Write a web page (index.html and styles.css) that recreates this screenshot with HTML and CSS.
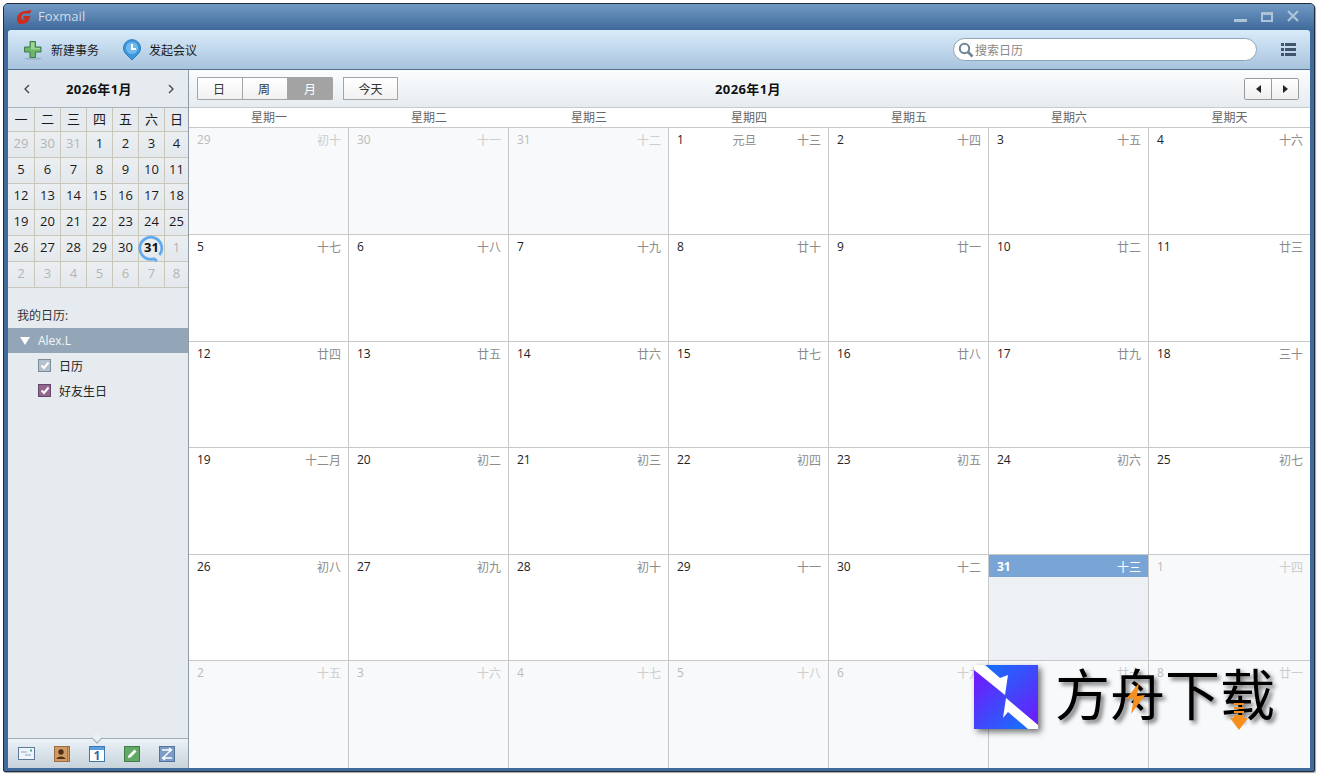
FILE: index.html
```html
<!DOCTYPE html>
<html lang="zh-CN">
<head>
    <meta charset="UTF-8">
    <title>Foxmail</title>
    <link rel="stylesheet" href="styles.css">
</head>
<body>
<div class="window">
    <div class="titlebar">
        <svg class="logo" width="15" height="14" viewBox="0 0 15 14"><path d="M14.500 0 L13 3.500 H8 C5.500 3.500 4 5.500 4 7.500 C4 9.500 5.500 10 7 10 L8 8.500 H6 L7 6 H13.500 L11 11.500 C9 13.500 6 14 3.500 14 C1 14 0 12 0 9 C0 4.500 4 1 9 1 Z" fill="#d02a1a"/></svg>
        <span class="app-name">Foxmail</span>
        <div class="win-btns">
            <i class="win-min"></i>
            <i class="win-max"></i>
            <svg width="12" height="12" viewBox="0 0 12 12"><path d="M1 1 L11 11 M11 1 L1 11" stroke="#adc3da" stroke-width="2.200"/></svg>
        </div>
    </div>
    <div class="toolbar">
        <button class="tool">
            <svg width="20" height="20" viewBox="0 0 20 20"><ellipse cx="10" cy="18.600" rx="9" ry="1.200" fill="#8ca3b8" opacity=".6"/><path d="M7 1.500 H12.500 V7 H18 V12 H12.500 V17.500 H7 V12 H1.500 V7 H7 Z" fill="#6cb56a" stroke="#3c7d48"/><path d="M8 2.500 H11.500 V8 H17 V9.500 H8 Z" fill="#9ad596"/></svg>
            新建事务
        </button>
        <button class="tool tool-meet">
            <svg width="18" height="22" viewBox="0 0 18 22"><path d="M9 21 L4 16 A8.500 8.500 0 1 1 14 16 Z" fill="#3f97dd" stroke="#2a78b8"/><circle cx="9" cy="9" r="6" fill="#6fb9ee"/><path d="M9 5 V10 H13" stroke="#fff" stroke-width="2" fill="none"/></svg>
            发起会议
        </button>
        <div class="search">
            <svg width="16" height="16" viewBox="0 0 16 16"><circle cx="6.500" cy="6.500" r="4.700" fill="none" stroke="#6f8496" stroke-width="2"/><path d="M10 10 L14.500 14.500" stroke="#6f8496" stroke-width="2.600"/></svg>
            <span>搜索日历</span>
        </div>
        <div class="list-icon"><i></i><i></i><i></i></div>
    </div>
    <div class="body">
        <aside class="sidebar">
            <div class="mini-head">
                <svg width="7" height="10" viewBox="0 0 7 10"><path d="M6 1 L2 5 L6 9" fill="none" stroke="#444" stroke-width="1.300"/></svg>
                <b>2026年1月</b>
                <svg width="7" height="10" viewBox="0 0 7 10"><path d="M1 1 L5 5 L1 9" fill="none" stroke="#444" stroke-width="1.300"/></svg>
            </div>
            <div class="mini-cal">
                <span class="wk">一</span><span class="wk">二</span><span class="wk">三</span><span class="wk">四</span><span class="wk">五</span><span class="wk">六</span><span class="wk">日</span>
                <span class="off">29</span><span class="off">30</span><span class="off">31</span><span>1</span><span>2</span><span>3</span><span>4</span>
                <span>5</span><span>6</span><span>7</span><span>8</span><span>9</span><span>10</span><span>11</span>
                <span>12</span><span>13</span><span>14</span><span>15</span><span>16</span><span>17</span><span>18</span>
                <span>19</span><span>20</span><span>21</span><span>22</span><span>23</span><span>24</span><span>25</span>
                <span>26</span><span>27</span><span>28</span><span>29</span><span>30</span>
                <span class="now">31<svg width="28" height="28" viewBox="0 0 28 28"><path d="M22.500 20 A11 11 0 1 0 17 23.800 L20 26" fill="none" stroke="#62aaee" stroke-width="2.800"/></svg></span>
                <span class="off">1</span>
                <span class="off">2</span><span class="off">3</span><span class="off">4</span><span class="off">5</span><span class="off">6</span><span class="off">7</span><span class="off">8</span>
            </div>
            <p class="my-cals">我的日历:</p>
            <div class="account"><i class="tri"></i>Alex.L</div>
            <label class="cal-row"><i class="check check-grey"><svg width="10" height="9" viewBox="0 0 10 9"><path d="M1.500 4.500 L4 7 L8.500 1.500" fill="none" stroke="#fff" stroke-width="2"/></svg></i>日历</label>
            <label class="cal-row"><i class="check check-purple"><svg width="10" height="9" viewBox="0 0 10 9"><path d="M1.500 4.500 L4 7 L8.500 1.500" fill="none" stroke="#fff" stroke-width="2"/></svg></i>好友生日</label>
            <div class="dock">
                <svg width="17" height="14" viewBox="0 0 17 14"><rect x=".5" y=".5" width="16" height="12" fill="#eef4f9" stroke="#5d7a9c"/><path d="M3 5 H9 M7 8 H13" stroke="#8ea3b8"/><rect x="12" y="2.500" width="2" height="2" fill="#4aa88c"/></svg>
                <svg width="16" height="16" viewBox="0 0 16 16"><rect x=".5" y=".5" width="15" height="15" fill="#d09a66" stroke="#9d6c3e"/><circle cx="7" cy="6" r="2.700" fill="#4f2e14"/><path d="M2.500 13 C3 9.500 11 9.500 11.500 13 Z" fill="#4f2e14"/><path d="M13.500 1 V15" stroke="#a87544"/></svg>
                <span class="dock-cal"><i></i>1</span>
                <svg width="16" height="16" viewBox="0 0 16 16"><rect x=".5" y=".5" width="15" height="15" fill="#62a866" stroke="#3f7d46"/><path d="M4 12 L4.500 9.500 L10.500 3.500 L12.500 5.500 L6.500 11.500 Z" fill="#fff"/></svg>
                <svg width="16" height="16" viewBox="0 0 16 16"><rect x=".5" y=".5" width="15" height="15" fill="#7b9cc4" stroke="#53739c"/><path d="M3 4 H12 M12 4 L4 12 M4 12 H13 M10 2 L12.500 4 L10 6 M6 10 L3.500 12 L6 14" fill="none" stroke="#fff" stroke-width="1.400"/></svg>
            </div>
            <i class="dock-notch"></i>
        </aside>
        <main class="main">
            <div class="cal-nav">
                <div class="nav-left">
                    <div class="seg">
                        <button>日</button><button>周</button><button class="active">月</button>
                    </div>
                    <button class="today-btn">今天</button>
                </div>
                <b class="cal-title">2026年1月</b>
                <div class="pager">
                    <button><i class="arrow-l"></i></button><button><i class="arrow-r"></i></button>
                </div>
            </div>
            <div class="week-head">
                <span>星期一</span><span>星期二</span><span>星期三</span><span>星期四</span><span>星期五</span><span>星期六</span><span>星期天</span>
            </div>
            <div class="grid">
                <div class="cell off"><span>29</span><em></em><small>初十</small></div>
                <div class="cell off"><span>30</span><em></em><small>十一</small></div>
                <div class="cell off"><span>31</span><em></em><small>十二</small></div>
                <div class="cell"><span>1</span><em>元旦</em><small>十三</small></div>
                <div class="cell"><span>2</span><em></em><small>十四</small></div>
                <div class="cell"><span>3</span><em></em><small>十五</small></div>
                <div class="cell"><span>4</span><em></em><small>十六</small></div>

                <div class="cell"><span>5</span><em></em><small>十七</small></div>
                <div class="cell"><span>6</span><em></em><small>十八</small></div>
                <div class="cell"><span>7</span><em></em><small>十九</small></div>
                <div class="cell"><span>8</span><em></em><small>廿十</small></div>
                <div class="cell"><span>9</span><em></em><small>廿一</small></div>
                <div class="cell"><span>10</span><em></em><small>廿二</small></div>
                <div class="cell"><span>11</span><em></em><small>廿三</small></div>

                <div class="cell"><span>12</span><em></em><small>廿四</small></div>
                <div class="cell"><span>13</span><em></em><small>廿五</small></div>
                <div class="cell"><span>14</span><em></em><small>廿六</small></div>
                <div class="cell"><span>15</span><em></em><small>廿七</small></div>
                <div class="cell"><span>16</span><em></em><small>廿八</small></div>
                <div class="cell"><span>17</span><em></em><small>廿九</small></div>
                <div class="cell"><span>18</span><em></em><small>三十</small></div>

                <div class="cell"><span>19</span><em></em><small>十二月</small></div>
                <div class="cell"><span>20</span><em></em><small>初二</small></div>
                <div class="cell"><span>21</span><em></em><small>初三</small></div>
                <div class="cell"><span>22</span><em></em><small>初四</small></div>
                <div class="cell"><span>23</span><em></em><small>初五</small></div>
                <div class="cell"><span>24</span><em></em><small>初六</small></div>
                <div class="cell"><span>25</span><em></em><small>初七</small></div>

                <div class="cell"><span>26</span><em></em><small>初八</small></div>
                <div class="cell"><span>27</span><em></em><small>初九</small></div>
                <div class="cell"><span>28</span><em></em><small>初十</small></div>
                <div class="cell"><span>29</span><em></em><small>十一</small></div>
                <div class="cell"><span>30</span><em></em><small>十二</small></div>
                <div class="cell today"><span>31</span><em></em><small>十三</small></div>
                <div class="cell off"><span>1</span><em></em><small>十四</small></div>

                <div class="cell off"><span>2</span><em></em><small>十五</small></div>
                <div class="cell off"><span>3</span><em></em><small>十六</small></div>
                <div class="cell off"><span>4</span><em></em><small>十七</small></div>
                <div class="cell off"><span>5</span><em></em><small>十八</small></div>
                <div class="cell off"><span>6</span><em></em><small class="under-mark">十九</small></div>
                <div class="cell off"><span class="under-mark">7</span><em></em><small class="under-mark">廿十</small></div>
                <div class="cell off"><span>8</span><em></em><small>廿一</small></div>
            </div>
        </main>
    </div>
    <div class="watermark">
        <svg class="wm-logo" width="64" height="64" viewBox="0 0 64 64">
            <defs>
                <linearGradient id="wmLow" x1="0" y1=".3" x2=".7" y2="1"><stop offset="0" stop-color="#6a1ffb"/><stop offset="1" stop-color="#1a6cfb"/></linearGradient>
                <linearGradient id="wmHigh" x1=".3" y1="0" x2="1" y2=".8"><stop offset="0" stop-color="#1a6cfb"/><stop offset="1" stop-color="#6a1ffb"/></linearGradient>
            </defs>
            <polygon points="0,0 0,64 64,64" fill="url(#wmLow)"/>
            <polygon points="0,0 64,0 64,64" fill="url(#wmHigh)"/>
            <path d="M0 0 L11 0 L26 13 L34 10 L31 30 L0 5 Z M32 33 L64 60 L64 64 L54 64 L34 47 L29 53 Z" fill="#fff"/>
        </svg>
        <span class="wm-text">方舟下载</span>
        <svg class="wm-bolt" width="19" height="31" viewBox="0 0 19 31"><path d="M13 0 L0 16 L8 15 L5 31 L19 12 L11 13 Z" fill="#f78f1e"/></svg>
        <svg class="wm-arrow" width="18" height="27" viewBox="0 0 18 27"><path d="M4 0 H14 V2 H4 Z M4 4 H14 V6 H4 Z M4 8 H14 V10 H4 Z M4 12 H14 V15 H18 L9 27 L0 15 H4 Z" fill="#f78f1e"/></svg>
    </div>
</div>
</body>
</html>
```

FILE: styles.css
```css
* {
    margin: 0;
    padding: 0;
    box-sizing: border-box;
}

html, body {
    height: 100%;
    overflow: hidden;
    background: #fff;
}

body {
    font-family: "Open Sans", "Noto Sans CJK SC", sans-serif;
    font-size: 12px;
    color: #222;
}

button {
    font: inherit;
    color: inherit;
    border: none;
    background: none;
}

i, em, small {
    font-style: normal;
    font-size: inherit;
}

.window {
    position: relative;
    display: flex;
    flex-direction: column;
    margin: 3px 0 0 3px;
    width: 1312px;
    height: 769px;
    padding: 0 4px 3px 4px;
    border: 1px solid #1e2c3c;
    border-radius: 5px 5px 2px 2px;
    background: #3f6a9a;
    box-shadow: 1px 1px 1px rgba(0,0,0,0.35);
}

.titlebar {
    display: flex;
    align-items: center;
    flex: none;
    height: 26px;
    margin: 0 -4px;
    padding: 0 15px 2px 13px;
    border-radius: 4px 4px 0 0;
    background: linear-gradient(#7199c4, #3f6a9a);
}

.logo {
    margin-top: 2px;
}

.app-name {
    margin-left: 6px;
    font-size: 13px;
    color: #cfdcea;
}

.win-btns {
    display: flex;
    align-items: center;
    gap: 14px;
    margin-left: auto;
}

.win-min {
    width: 13px;
    height: 3px;
    margin-top: 9px;
    background: #adc3da;
}

.win-max {
    width: 12px;
    height: 10px;
    margin-top: 2px;
    border: 2px solid #adc3da;
    border-top-width: 3px;
}

.toolbar {
    display: flex;
    align-items: center;
    flex: none;
    height: 40px;
    padding: 0 14px 0 15px;
    border-bottom: 1px solid #536f8b;
    border-radius: 3px 3px 0 0;
    background: linear-gradient(#d9ebfa, #a8c3dd);
}

.tool {
    display: flex;
    align-items: center;
    gap: 8px;
    color: #1a1a1a;
}

.tool-meet {
    gap: 8px;
    margin-left: 24px;
}

.search {
    display: flex;
    align-items: center;
    gap: 1px;
    width: 304px;
    height: 23px;
    margin-left: auto;
    margin-right: 24px;
    padding-left: 4px;
    border: 1px solid #8ea4ba;
    border-radius: 12px;
    background: #fff;
    color: #888;
}

.list-icon {
    display: flex;
    flex-direction: column;
    gap: 2px;
    width: 15px;
}

.list-icon i {
    height: 3px;
    background: linear-gradient(to right, #3f556c 3px, transparent 3px, transparent 4px, #3f556c 4px);
}

.body {
    display: flex;
    flex: 1;
    min-height: 0;
}

.sidebar {
    position: relative;
    display: flex;
    flex-direction: column;
    flex: none;
    width: 181px;
    border-right: 1px solid #8f9aa5;
    background: #e6ebf0;
}

.mini-head {
    display: flex;
    align-items: center;
    justify-content: space-between;
    height: 38px;
    padding: 0 13px 0 15px;
    border-bottom: 1px solid #a9b3bd;
}

.mini-head b {
    font-size: 13px;
    letter-spacing: .4px;
    color: #111;
}

.mini-cal {
    display: grid;
    grid-template-columns: 27px repeat(5, 26px) 1fr;
    grid-template-rows: 24px repeat(6, 26px);
}

.mini-cal span {
    position: relative;
    display: flex;
    align-items: center;
    justify-content: center;
    padding-bottom: 3px;
    border-right: 1px solid #c9c6ba;
    border-bottom: 1px solid #c9c6ba;
    background: linear-gradient(#ebeff2, #e3e8ed);
    font-size: 13px;
    color: #1a1a1a;
}

.mini-cal span:nth-child(7n) {
    border-right: none;
}

.mini-cal .wk {
    padding-bottom: 2px;
    background: #e6ebf0;
}

.mini-cal .off {
    color: #b4b4b4;
}

.mini-cal .now {
    font-weight: 700;
    color: #111;
}

.now svg {
    position: absolute;
    left: -2px;
    top: -1px;
}

.my-cals {
    margin: 19px 0 3px 9px;
    line-height: 18px;
    color: #333;
}

.account {
    display: flex;
    align-items: center;
    height: 25px;
    padding-left: 12px;
    background: #93a6b8;
    color: #f2f6fa;
}

.tri {
    width: 0;
    height: 0;
    margin-right: 8px;
    border-style: solid;
    border-width: 8px 5px 0;
    border-color: #fff transparent transparent;
}

.cal-row {
    display: flex;
    align-items: center;
    height: 25px;
    padding-left: 30px;
    color: #222;
}

.check {
    display: flex;
    align-items: center;
    justify-content: center;
    width: 13px;
    height: 13px;
    margin-right: 8px;
    border: 1px solid #7e8a96;
}

.check-grey {
    background: #b4c0cb;
}

.check-purple {
    border-color: #65456b;
    background: #93688f;
}

.dock {
    display: flex;
    align-items: center;
    justify-content: space-between;
    height: 30px;
    margin-top: auto;
    padding: 0 13px 0 10px;
    border-top: 1px solid #9fadb5;
    background: linear-gradient(#ecf3f9, #c7d2da);
}

.dock-cal {
    display: flex;
    flex-direction: column;
    align-items: center;
    width: 16px;
    height: 16px;
    border: 1px solid #3f79ac;
    background: #fff;
    font-size: 12px;
    font-weight: 700;
    line-height: 11px;
    color: #2f6ca3;
}

.dock-cal i {
    flex: none;
    width: 100%;
    height: 3px;
    background: #5b9fe0;
}

.dock-notch {
    position: absolute;
    left: 85px;
    bottom: 26px;
    width: 8px;
    height: 8px;
    border-right: 1px solid #9fadb5;
    border-bottom: 1px solid #9fadb5;
    background: #e9f0f6;
    transform: rotate(45deg);
}

.main {
    display: flex;
    flex-direction: column;
    flex: 1;
    min-width: 0;
    background: #fff;
}

.cal-nav {
    display: grid;
    grid-template-columns: 1fr auto 1fr;
    align-items: center;
    flex: none;
    height: 38px;
    padding: 0 11px 0 8px;
    border-bottom: 1px solid #c5cad0;
    background: linear-gradient(#fbfdfe, #e6ebf0);
}

.nav-left {
    display: flex;
    gap: 10px;
}

.seg {
    display: flex;
    border: 1px solid #a4a4a4;
    border-radius: 1px;
}

.seg button {
    width: 45px;
    height: 21px;
    padding-right: 2px;
    border-right: 1px solid #a4a4a4;
    background: linear-gradient(#fff, #f1f1f1);
    color: #333;
}

.seg button:last-child {
    width: 44px;
    padding-right: 0;
    border-right: none;
}

.seg .active {
    background: #a3a3a3;
    color: #fff;
}

.today-btn {
    width: 55px;
    height: 23px;
    border: 1px solid #a4a4a4;
    background: linear-gradient(#fff, #f1f1f1);
    color: #333;
}

.cal-title {
    font-size: 13px;
    letter-spacing: .4px;
    color: #111;
}

.pager {
    display: flex;
    justify-self: end;
    border: 1px solid #9a9a9a;
    border-radius: 2px;
}

.pager button {
    display: flex;
    align-items: center;
    justify-content: center;
    width: 27px;
    height: 20px;
    background: linear-gradient(#fff, #eee);
}

.pager button:last-child {
    width: 26px;
}

.pager button:first-child {
    border-right: 1px solid #9a9a9a;
}

.arrow-l, .arrow-r {
    width: 0;
    height: 0;
    border-style: solid;
    border-width: 4px 5px;
    border-color: transparent;
}

.arrow-l {
    margin-right: 5px;
    border-right-color: #222;
}

.arrow-r {
    margin-left: 5px;
    border-left-color: #222;
}

.week-head {
    display: grid;
    grid-template-columns: repeat(6, 160px) 1fr;
    flex: none;
    height: 20px;
    border-bottom: 1px solid #c8c8c8;
    line-height: 19px;
    text-align: center;
    color: #666;
}

.grid {
    display: grid;
    flex: 1;
    grid-template-columns: repeat(6, 160px) 1fr;
    grid-template-rows: 107px 107px 106px 107px 106px 1fr;
}

.cell {
    display: grid;
    grid-template-columns: 1fr auto 1fr;
    grid-auto-rows: 23px;
    align-items: center;
    padding: 0 7px 0 8px;
    border-right: 1px solid #c8c8c8;
    border-bottom: 1px solid #c8c8c8;
    color: #222;
}

.cell:nth-child(7n) {
    border-right: none;
}

.cell:nth-child(n+36) {
    border-bottom: none;
}

.cell em {
    margin-left: -9px;
    color: #8c8c8c;
}

.cell small {
    justify-self: end;
    color: #8c8c8c;
}

.cell.off {
    background: #f7f9fb;
    color: #bbb;
}

.cell.off small {
    color: #cdcdcd;
}

.cell.today {
    position: relative;
    background: linear-gradient(#78a5d6 22px, #edf0f5 22px);
    color: #fff;
    font-weight: 700;
}

.cell.today small {
    color: #fff;
    font-weight: 400;
}

.under-mark {
    visibility: visible;
}

.watermark {
    position: absolute;
    left: 970px;
    top: 661px;
    width: 310px;
    height: 70px;
}

.wm-logo {
    position: absolute;
    left: 0;
    top: 0;
    filter: drop-shadow(3px 3px 3px rgba(0,0,0,0.55));
}

.wm-text {
    position: absolute;
    left: 81px;
    top: -11px;
    font-size: 55px;
    line-height: 80px;
    white-space: nowrap;
    color: #000;
    text-shadow: 3px 3px 4px rgba(0,0,0,0.55);
}

.wm-bolt {
    position: absolute;
    left: 152px;
    top: 18px;
}

.wm-arrow {
    position: absolute;
    left: 256px;
    top: 38px;
}
```
